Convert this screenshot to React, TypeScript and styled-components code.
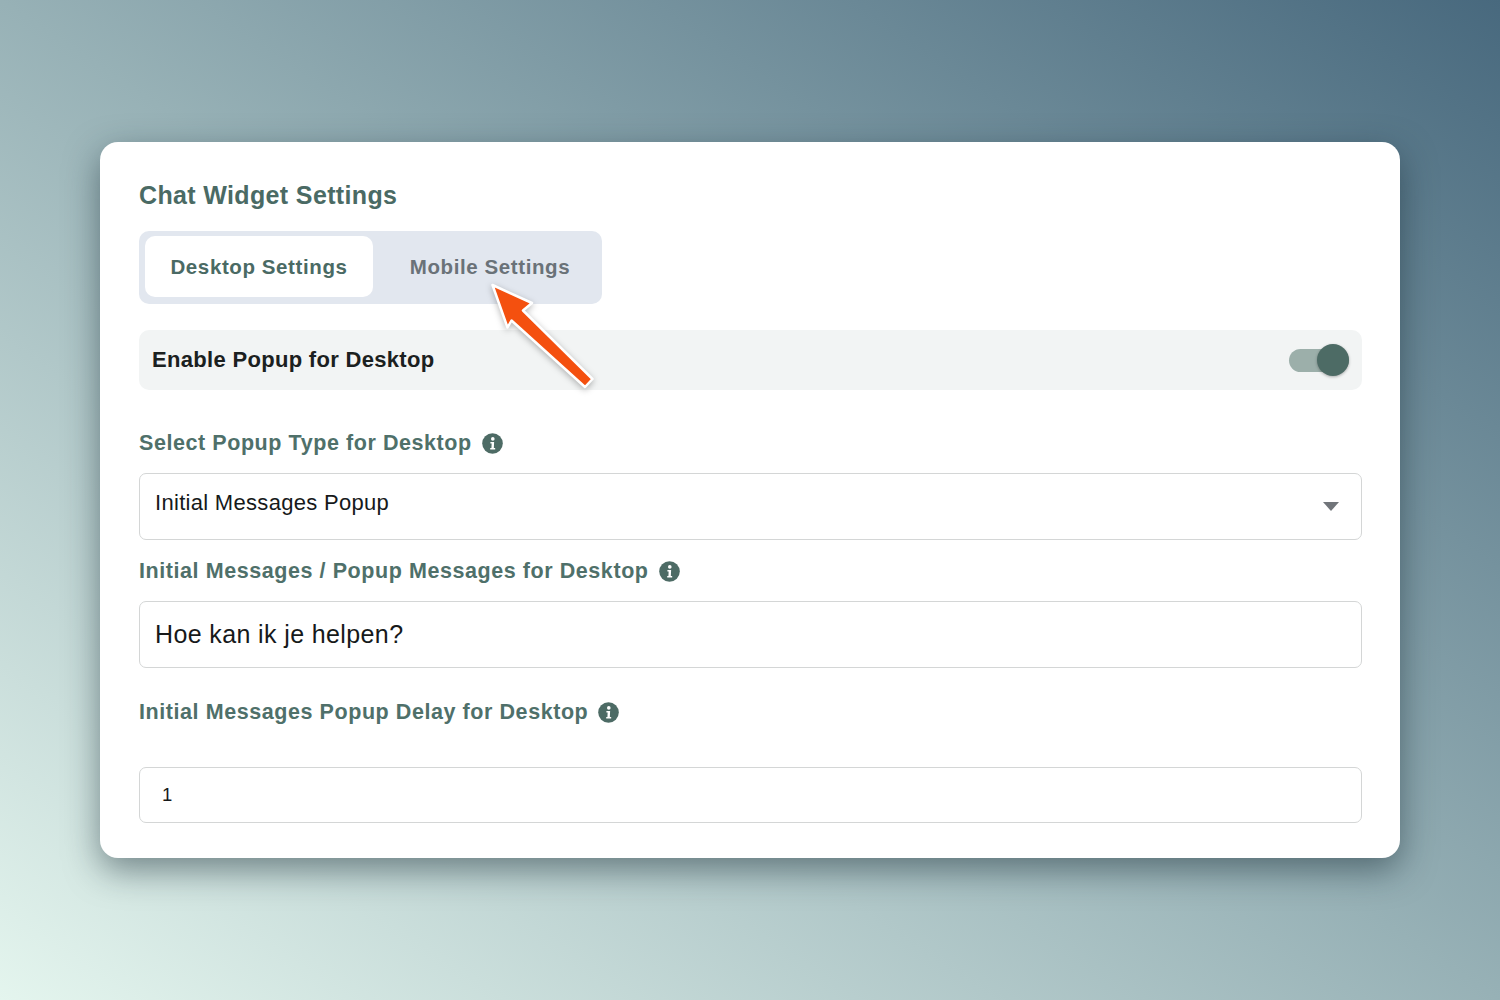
import React from "react";
import styled, { createGlobalStyle } from "styled-components";

const Global = createGlobalStyle`
  html, body { margin: 0; padding: 0; }
  body { font-family: "Liberation Sans", Arial, sans-serif; }
`;

const Page = styled.div`
  width: 1500px;
  height: 1000px;
  display: flex;
  align-items: center;
  justify-content: center;
  overflow: hidden;
  background: linear-gradient(to top right, #e4f5ee 0%, #97b1b6 50%, #48697e 100%);
`;

const Card = styled.main`
  position: relative;
  box-sizing: border-box;
  width: 1300px;
  height: 716px;
  padding: 36px 38px 35px 39px;
  background: #fff;
  border-radius: 18px;
  box-shadow: 0 12px 34px rgba(20, 40, 50, 0.5);
`;

const Title = styled.h1`
  margin: 0 0 19px;
  font-size: 25px;
  line-height: 34px;
  font-weight: 700;
  letter-spacing: 0.36px;
  color: #4a6a64;
`;

const Tabs = styled.div`
  box-sizing: border-box;
  width: 463px;
  height: 73px;
  padding: 5px 0 7px 6px;
  display: flex;
  background: #e2e7ef;
  border-radius: 10px;
`;

const Tab = styled.div<{ $active?: boolean }>`
  box-sizing: border-box;
  flex: ${(p) => (p.$active ? "0 0 228px" : "1")};
  padding-left: ${(p) => (p.$active ? "0" : "5px")};
  display: flex;
  align-items: center;
  justify-content: center;
  border-radius: 10px;
  font-size: 20.5px;
  font-weight: 700;
  letter-spacing: 0.6px;
  color: ${(p) => (p.$active ? "#4a6a64" : "#6a7278")};
  background: ${(p) => (p.$active ? "#fff" : "transparent")};
`;

const ToggleRow = styled.div`
  box-sizing: border-box;
  height: 60px;
  margin-top: 26px;
  padding: 0 13px;
  display: flex;
  align-items: center;
  justify-content: space-between;
  background: #f2f4f4;
  border-radius: 10px;
`;

const ToggleLabel = styled.span`
  font-size: 22px;
  font-weight: 700;
  letter-spacing: 0.31px;
  color: #1b2020;
`;

const Switch = styled.div`
  position: relative;
  width: 60px;
  height: 23px;
  background: #9cafaa;
  border-radius: 12px;
`;

const Knob = styled.div`
  position: absolute;
  right: 0;
  top: -4.5px;
  width: 32px;
  height: 32px;
  border-radius: 50%;
  background: #4d6b65;
  box-shadow: 0 1px 3px rgba(0, 0, 0, 0.3);
`;

const Label = styled.label<{ $top: number }>`
  height: 26px;
  margin-top: ${(p) => p.$top}px;
  display: flex;
  align-items: center;
  gap: 10px;
  font-size: 21.5px;
  font-weight: 700;
  letter-spacing: 0.57px;
  color: #4f706a;
`;

const Field = styled.div<{ $top: number; $height: number; $size: number; $pad: number; $track: number }>`
  box-sizing: border-box;
  height: ${(p) => p.$height}px;
  margin-top: ${(p) => p.$top}px;
  padding: 0 22px 0 ${(p) => p.$pad}px;
  display: flex;
  align-items: center;
  justify-content: space-between;
  border: 1.5px solid #d4d6d6;
  border-radius: 7px;
  background: #fff;
  font-size: ${(p) => p.$size}px;
  letter-spacing: ${(p) => p.$track}px;
  color: #16191a;
`;

const SelectValue = styled.span`
  margin-top: -7px;
`;

const Caret = styled.span`
  width: 0;
  height: 0;
  border-left: 8px solid transparent;
  border-right: 8px solid transparent;
  border-top: 9px solid #71757a;
`;

const ArrowSvg = styled.svg`
  position: absolute;
  left: 380px;
  top: 130px;
  overflow: visible;
  filter: drop-shadow(0 2px 3px rgba(0, 0, 0, 0.28));
`;

const InfoIcon = styled.svg`
  flex: none;
`;

const Info = () => (
  <InfoIcon width="21" height="21" viewBox="0 0 22 22" aria-hidden="true">
    <circle cx="11" cy="11" r="10.8" fill="#4d6b65" />
    <circle cx="11.3" cy="6.2" r="1.9" fill="#fff" />
    <path d="M8.8 9.4h3.9l-.3 6.2h1.4v1.7H8.6v-1.7h1.3l.2-4.5H8.8z" fill="#fff" />
  </InfoIcon>
);

export default function App() {
  return (
    <Page>
      <Global />
      <Card>
        <Title>Chat Widget Settings</Title>
        <Tabs>
          <Tab $active>Desktop Settings</Tab>
          <Tab>Mobile Settings</Tab>
        </Tabs>
        <ToggleRow>
          <ToggleLabel>Enable Popup for Desktop</ToggleLabel>
          <Switch>
            <Knob />
          </Switch>
        </ToggleRow>
        <Label $top={40}>
          Select Popup Type for Desktop <Info />
        </Label>
        <Field $top={17} $height={67} $size={22} $pad={15} $track={0.3}>
          <SelectValue>Initial Messages Popup</SelectValue>
          <Caret />
        </Field>
        <Label $top={18}>
          Initial Messages / Popup Messages for Desktop <Info />
        </Label>
        <Field $top={17} $height={67} $size={25} $pad={15} $track={0.38}>
          Hoe kan ik je helpen?
        </Field>
        <Label $top={31}>
          Initial Messages Popup Delay for Desktop <Info />
        </Label>
        <Field $top={42} $height={56} $size={18.5} $pad={22} $track={0}>
          1
        </Field>
        <ArrowSvg width="120" height="120" viewBox="0 0 120 120" aria-hidden="true">
          <polygon
            points="12.5,13 52,31 43,38.5 112.5,107 105,115 31.5,48.5 27.5,55.5"
            fill="#f4500f"
            stroke="#fff"
            strokeWidth="2.5"
            strokeLinejoin="round"
          />
        </ArrowSvg>
      </Card>
    </Page>
  );
}
